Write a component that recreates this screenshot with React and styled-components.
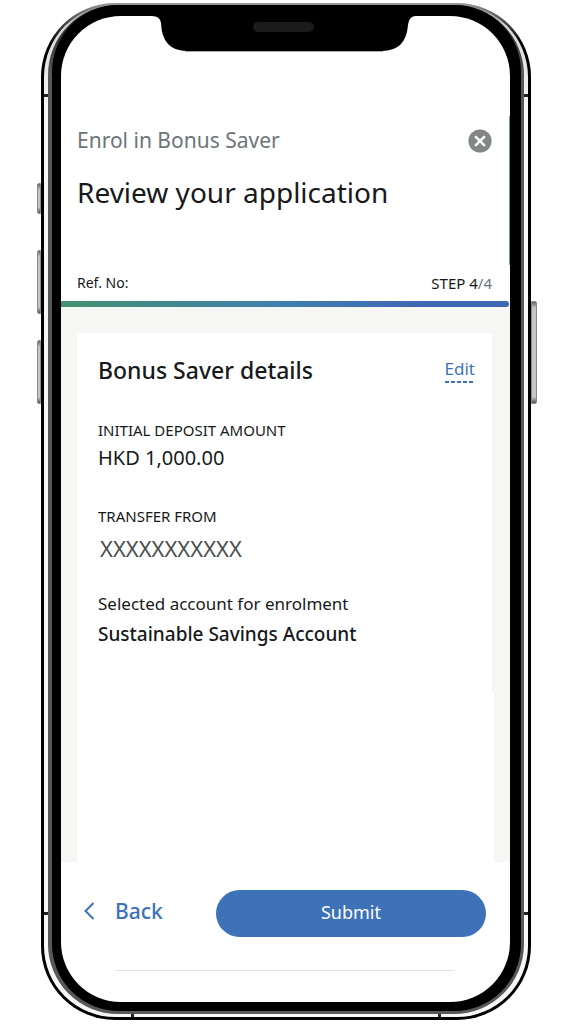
import React from "react";
import styled, { createGlobalStyle } from "styled-components";

const GlobalStyle = createGlobalStyle`
  * { box-sizing: border-box; }
  body { margin: 0; background: #ffffff; }
  h1, h2, p, dl, dt, dd { margin: 0; font-weight: 400; }
`;

const blue = "#3d72b9";

const Page = styled.div`
  padding: 3px 43px 4px 41px;
  font-family: "Noto Sans", "Open Sans", sans-serif;
  color: #17191b;
`;

const Shell = styled.div`
  position: relative;
  border: 3px solid transparent;
  border-top-width: 2px;
  border-radius: 74px;
  background:
    linear-gradient(#8c8c8c, #d5d5d5 20px, #f7f7f7 100px) padding-box,
    linear-gradient(#9a9a9a, #6a6a6a 10px, #000000 40px) border-box;
  padding: 0 4px 3px;
`;

const Rim = styled.div`
  border-radius: 70px;
  background: linear-gradient(#1c1c1c, #585858 70px);
  padding: 0 3px 3px 4px;
`;

const Bezel = styled.div`
  border-radius: 67px;
  background: #000000;
  padding: 11px 11px 9px 9px;
`;

const Screen = styled.div`
  border-radius: 60px;
  background: #ffffff;
  overflow: hidden;
`;

const SideKey = styled.span`
  position: absolute;
  top: ${(p) => p.$top}px;
  ${(p) => (p.$side === "left" ? "left: -7px; border-radius: 2px 0 0 2px;" : "right: -9px; border-radius: 0 2px 2px 0;")}
  width: ${(p) => (p.$side === "left" ? 4 : 6)}px;
  height: ${(p) => p.$height}px;
  border: 1px solid #8b8b8b;
  background: linear-gradient(#666666, #c6c6c6 6px, #c6c6c6 calc(100% - 6px), #555555);
`;

const Seam = styled.span`
  position: absolute;
  background: #222222;
  width: ${(p) => (p.$upright ? 3 : 4)}px;
  height: 3px;
  ${(p) => p.$place}
`;

const Notch = styled.svg`
  position: absolute;
  top: 0;
  left: 50%;
  margin-left: -134px;
  width: 264px;
  height: 48px;
`;

const Header = styled.header`
  padding: 108px 18px 8px 16px;
  background: linear-gradient(#6f9bd0, #6f9bd0) right 100px / 1px 149px no-repeat;
`;

const Row = styled.div`
  display: flex;
  justify-content: space-between;
  align-items: center;
`;

const Product = styled.p`
  font-size: 21px;
  line-height: 32px;
  color: #6e7579;
`;

const CloseButton = styled.button`
  display: flex;
  border: 0;
  padding: 2px 0 0;
  background: none;
  cursor: pointer;
`;

const PageTitle = styled.h1`
  margin-top: 16px;
  font-size: 28px;
  line-height: 40px;
`;

const Meta = styled(Row)`
  margin-top: 61px;
  font-size: 14px;
  line-height: 20px;
`;

const Step = styled.span`
  font-size: 15px;
`;

const Total = styled.span`
  color: #6e7579;
`;

const Progress = styled.div`
  position: relative;
  z-index: 1;
  height: 6px;
  border-radius: 0 3px 3px 0;
  margin-right: 1px;
  background: linear-gradient(90deg, #429270, #3f7fae 50%, #4068b4 80%, #4068b4);
`;

const Main = styled.main`
  margin-top: -3px;
  padding: 29px 18px 0 16px;
  background: #f6f6f4;
`;

const Card = styled.section`
  min-height: 358px;
  padding: 21px 17px 0 21px;
  background: #ffffff;
`;

const CardTail = styled.div`
  height: 171px;
  margin-right: -2px;
  background: #ffffff;
`;

const CardTitle = styled.h2`
  font-size: 23px;
  font-weight: 500;
  line-height: 32px;
`;

const EditLink = styled.a`
  padding-bottom: 2px;
  font-size: 17px;
  line-height: 24px;
  color: ${blue};
  text-decoration: none;
  background: repeating-linear-gradient(90deg, ${blue} 0 4px, transparent 4px 6px) bottom / 100% 2px no-repeat;
`;

const Label = styled.dt`
  margin-top: ${(p) => p.$gap}px;
  font-size: ${(p) => p.$size || 15}px;
  line-height: 24px;
`;

const Value = styled.dd`
  margin-top: ${(p) => p.$gap || 0}px;
  font-size: ${(p) => p.$size || 20}px;
  line-height: 32px;
  color: ${(p) => (p.$muted ? "#4b4f52" : "inherit")};
  padding-left: ${(p) => (p.$muted ? 2 : 0)}px;
  font-weight: ${(p) => p.$weight || 400};
`;

const Footer = styled.footer`
  padding: 28px 24px 31px 22px;
`;

const Actions = styled.div`
  display: flex;
  align-items: center;
  justify-content: space-between;
`;

const BackButton = styled.button`
  display: flex;
  align-items: center;
  gap: 20px;
  border: 0;
  padding: 0 0 5px;
  background: none;
  font: 500 21px/32px "Noto Sans", sans-serif;
  color: ${blue};
  cursor: pointer;
`;

const SubmitButton = styled.button`
  flex: 0 1 270px;
  height: 47px;
  border: 0;
  border-radius: 24px;
  padding: 0 0 4px;
  background: ${blue};
  font: 400 18px/24px "Noto Sans", sans-serif;
  color: #ffffff;
  cursor: pointer;
`;

const Divider = styled.hr`
  height: 1px;
  border: 0;
  margin: 33px 31px 0 32px;
  background: #e3e3e3;
`;

export default function App() {
  return (
    <>
      <GlobalStyle />
      <Page>
        <Shell>
          <SideKey $side="left" $top={178} $height={31} />
          <SideKey $side="left" $top={245} $height={64} />
          <SideKey $side="left" $top={335} $height={64} />
          <SideKey $side="right" $top={296} $height={103} />
          <Seam $place="top: 89px; left: 0;" />
          <Seam $place="top: 89px; right: 0;" />
          <Seam $place="bottom: 102px; left: 0;" />
          <Seam $place="bottom: 102px; right: 0;" />
          <Seam $upright $place="bottom: 0; left: 87px;" />
          <Seam $upright $place="bottom: 0; right: 87px;" />
          <Rim>
            <Bezel>
              <Screen>
                <Header>
                  <Row>
                    <Product>Enrol in Bonus Saver</Product>
                    <CloseButton type="button" aria-label="Close">
                      <svg width="24" height="24" viewBox="0 0 24 24" aria-hidden="true">
                        <circle cx="12" cy="12" r="11.6" fill="#838787" />
                        <path d="M7.8 7.8l8.4 8.4M16.2 7.8l-8.4 8.4" stroke="#fff" strokeWidth="2.4" strokeLinecap="round" />
                      </svg>
                    </CloseButton>
                  </Row>
                  <PageTitle>Review your application</PageTitle>
                  <Meta>
                    <span>Ref. No:</span>
                    <Step>STEP 4<Total>/4</Total></Step>
                  </Meta>
                </Header>
                <Progress role="progressbar" aria-label="Step" aria-valuenow={4} aria-valuemin={0} aria-valuemax={4} />
                <Main>
                  <Card>
                    <Row>
                      <CardTitle>Bonus Saver details</CardTitle>
                      <EditLink href="#edit">Edit</EditLink>
                    </Row>
                    <dl>
                      <Label $gap={32}>INITIAL DEPOSIT AMOUNT</Label>
                      <Value>HKD 1,000.00</Value>
                      <Label $gap={30}>TRANSFER FROM</Label>
                      <Value $gap={4} $size={22} $muted>XXXXXXXXXXX</Value>
                      <Label $gap={28} $size={17}>Selected account for enrolment</Label>
                      <Value $gap={2} $size={19} $weight={500}>Sustainable Savings Account</Value>
                    </dl>
                  </Card>
                  <CardTail />
                </Main>
                <Footer>
                  <Actions>
                    <BackButton type="button">
                      <svg width="12" height="18" viewBox="0 0 12 18" fill="none" aria-hidden="true">
                        <path d="M10.5 1L2.5 9l8 8" stroke={blue} strokeWidth="2" />
                      </svg>
                      Back
                    </BackButton>
                    <SubmitButton type="submit">Submit</SubmitButton>
                  </Actions>
                  <Divider />
                </Footer>
              </Screen>
            </Bezel>
          </Rim>
          <Notch viewBox="0 0 264 48" aria-hidden="true">
            <path d="M0 10V11Q8 11 9 18Q10 46 35 46H230Q254 46 256 20Q257 11 264 11V10Z" fill="#000" />
            <path d="M33 46.5H231" stroke="#aaa" strokeWidth="1" />
            <rect x="101" y="17" width="61" height="10" rx="5" fill="#1b1b1b" />
          </Notch>
        </Shell>
      </Page>
    </>
  );
}
